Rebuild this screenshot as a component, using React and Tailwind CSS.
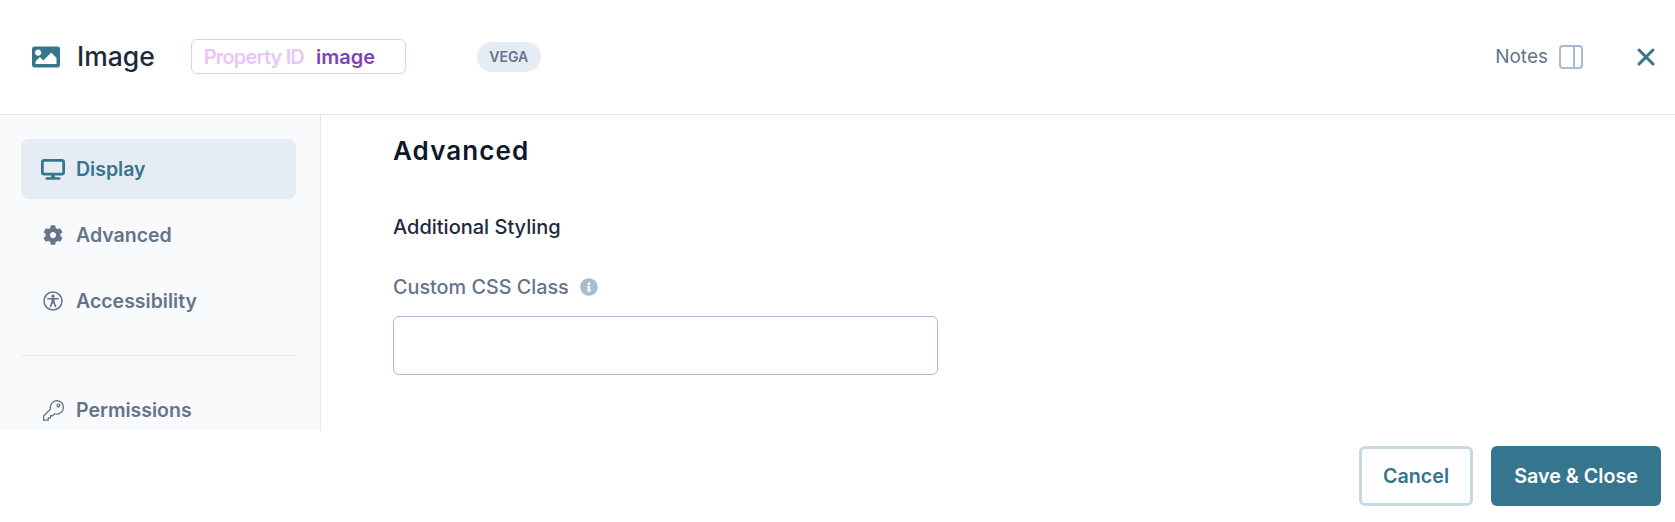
import React from "react";
import { FaCog, FaImage, FaInfoCircle } from "react-icons/fa";
import { X } from "lucide-react";

const Monitor = ({ className }) => (
  <svg viewBox="0 0 23 20" className={className} fill="none" stroke="currentColor">
    <rect x="1.3" y="1.3" width="20.4" height="13.2" rx="1.800" strokeWidth="2.600" />
    <path d="M11.500 15v3.500" strokeWidth="3.500" />
    <path d="M5.500 18.700h12" strokeWidth="2.400" strokeLinecap="round" />
  </svg>
);

const Access = ({ className }) => (
  <svg viewBox="0 0 20 20" className={className} fill="none" stroke="currentColor">
    <circle cx="10" cy="10" r="9" strokeWidth="1.500" />
    <circle cx="10" cy="5.200" r="1.600" fill="currentColor" stroke="none" />
    <path d="M4.800 7.800h10.400" strokeWidth="1.600" strokeLinecap="round" />
    <path d="M10 7.800v4.500" strokeWidth="3" />
    <path d="M9 11.500l-1.500 4M11 11.500l1.500 4" strokeWidth="1.700" strokeLinecap="round" />
  </svg>
);

const Key = ({ className }) => (
  <svg viewBox="1 1 18 18" className={className} fill="none" stroke="currentColor" strokeWidth="1.100" strokeLinejoin="round">
    <path d="M12.700 1.500a5.800 5.800 0 0 1 0 11.600c-.6 0-1.200-.1-1.700-.3l-1.700 1.700H7.400v1.900H5.500v1.900H1.500v-3.600l6-6a5.800 5.800 0 0 1 5.200-7.200z" />
    <circle cx="14.200" cy="5.800" r="1.200" />
  </svg>
);

const NavItem = ({ icon, label, active }) => (
  <div
    className={`flex h-[60px] items-center gap-[11px] rounded-lg pl-[20px] text-[19.500px] font-semibold ${
      active ? "bg-[#e6ecf3] text-[#35758d]" : "text-[#64748b]"
    }`}
  >
    <div className="flex w-[24px] justify-center">{icon}</div>
    <span className="pt-[1px]">{label}</span>
  </div>
);

export default function App() {
  return (
    <div className="flex h-[522px] w-full flex-col overflow-hidden bg-white font-['Inter',sans-serif]">
      <header className="flex h-[115px] shrink-0 items-center border-b border-[#e2e8f0] pb-[1px] pl-[32px] pr-[15px]">
        <FaImage className="h-[28px] w-[28px] text-[#35758d]" />
        <h1 className="ml-[17px] text-[26.500px] font-medium text-[#1e293b]">Image</h1>
        <div className="ml-[36px] flex h-[35px] w-[215px] items-center gap-[12px] rounded-md border border-[#e9c6f9] pl-[12px] text-[20px] font-semibold">
          <span className="tracking-[-0.85px] text-[#e9c6f9]">Property ID</span>
          <span className="text-[#7e43b8]">image</span>
        </div>
        <div className="ml-[71px] flex h-[30px] w-[64px] items-center justify-center rounded-full bg-[#e6ecf3] text-[14px] font-semibold text-[#64748b]">
          VEGA
        </div>
        <div className="ml-auto flex items-center">
          <span className="pt-[1px] text-[19px] text-[#64748b]">Notes</span>
          <div className="ml-[11px] flex h-[24px] w-[24px] justify-end rounded-[4px] border-2 border-[#a9bccd]">
            <div className="w-[8px] border-l-2 border-[#a9bccd]" />
          </div>
          <X className="ml-[49px] h-[28px] w-[28px] text-[#35758d]" strokeWidth={2.6} />
        </div>
      </header>

      <div className="flex h-[316px] shrink-0 overflow-hidden">
        <aside className="w-[321px] shrink-0 overflow-hidden border-r border-[#e2e8f0] bg-[#f8fafc] pl-[21px] pr-[24px] pt-[24px]">
          <div className="flex flex-col gap-[6px]">
            <NavItem active label="Display" icon={<Monitor className="h-[21px] w-[24px]" />} />
            <NavItem label="Advanced" icon={<FaCog className="h-[20px] w-[20px]" />} />
            <NavItem label="Accessibility" icon={<Access className="h-[20px] w-[20px]" />} />
          </div>
          <div className="mt-[24px] border-t border-[#e2e8f0]" />
          <div className="mt-[24px]">
            <NavItem label="Permissions" icon={<Key className="h-[21px] w-[21px]" />} />
          </div>
        </aside>
        <main className="flex-1 pl-[72px] pt-[18px]">
          <h2 className="text-[26px] font-semibold leading-[36px] tracking-[1.1px] text-[#0f172a]">Advanced</h2>
          <h3 className="mt-[44px] text-[20px] font-medium leading-[28px] text-[#1e293b]">Additional Styling</h3>
          <div className="mt-[32px] flex items-center gap-[11px] text-[19.800px] font-medium leading-[28px] text-[#64748b]">
            Custom CSS Class
            <FaInfoCircle className="h-[18px] w-[18px] text-[#a9bccd]" />
          </div>
          <input className="mt-[15px] block h-[59px] w-[545px] rounded-md border border-[#a9bccd] bg-white" />
        </main>
      </div>

      <footer className="flex flex-1 items-start justify-end gap-[18px] pr-[14px] pt-[15px]">
        <button className="h-[60px] w-[114px] rounded-md border-[3px] border-[#c5d9e3] pt-[1px] text-[19.700px] font-semibold text-[#35758d]">Cancel</button>
        <button className="h-[60px] w-[170px] rounded-md bg-[#35758d] pt-[1px] text-[19.700px] font-semibold text-white">Save &amp; Close</button>
      </footer>
    </div>
  );
}
